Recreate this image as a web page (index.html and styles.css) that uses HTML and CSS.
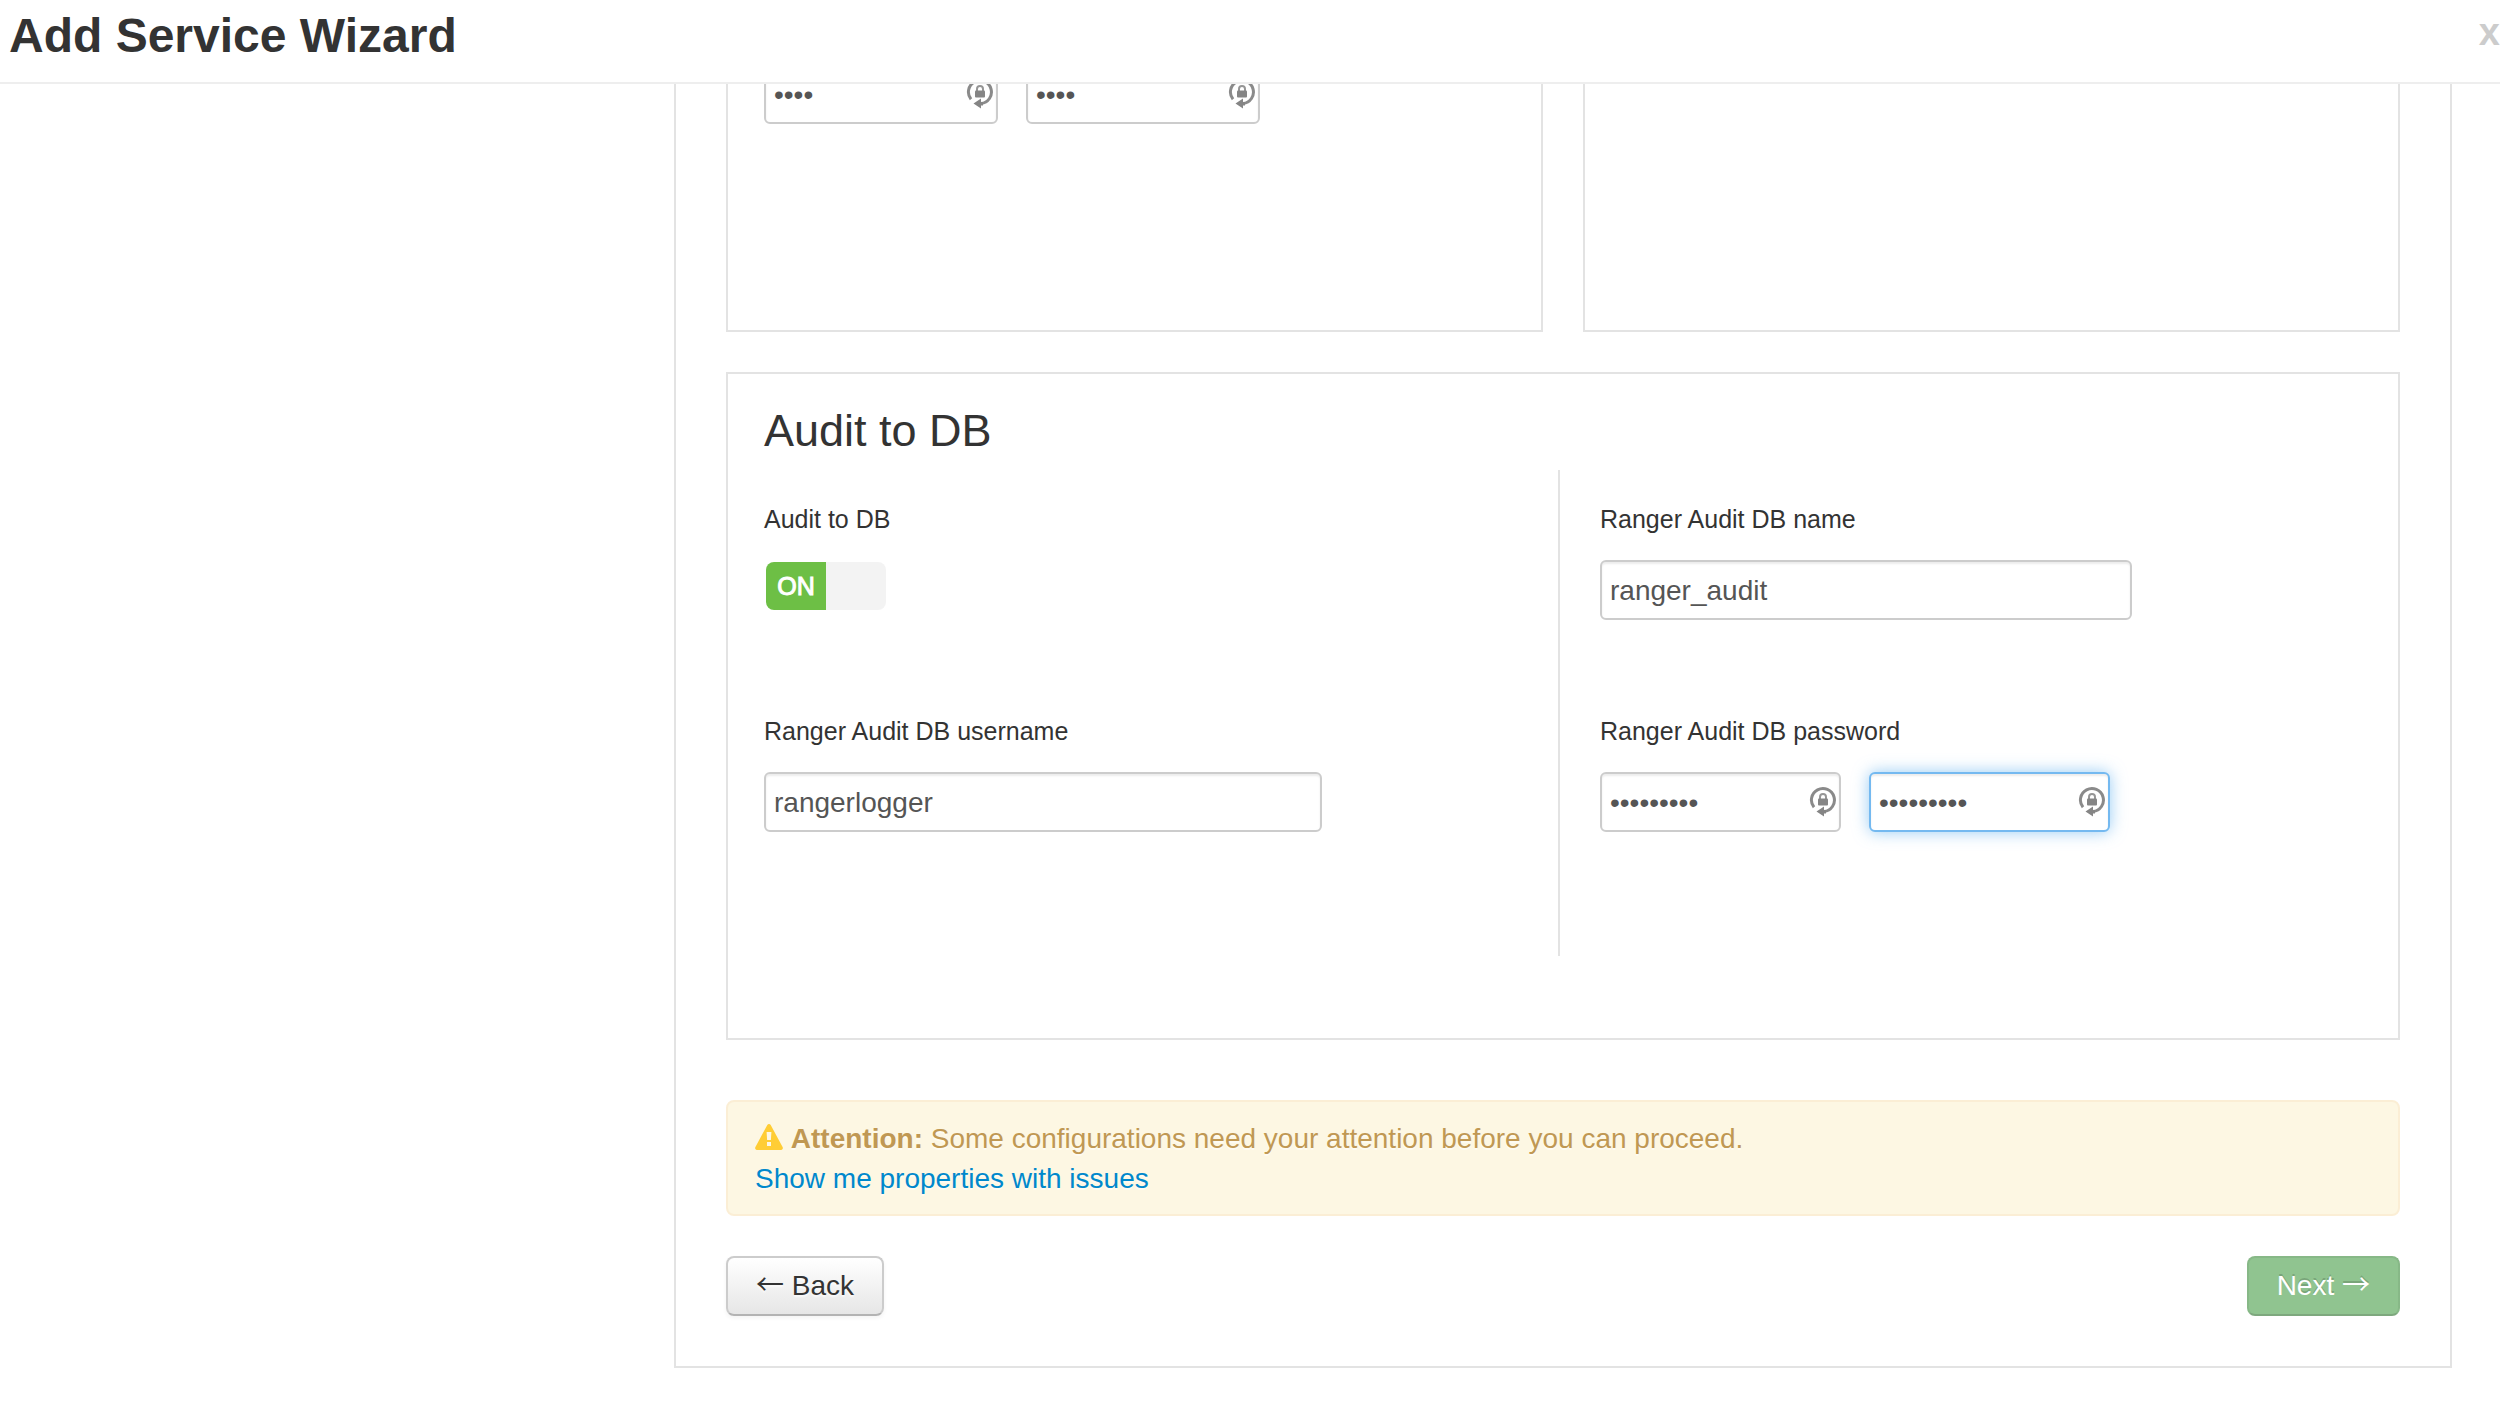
FILE: index.html
```html
<!DOCTYPE html>
<html lang="en">
<head>
<meta charset="utf-8">
<title>Add Service Wizard</title>
<meta name="viewport" content="width=device-width, initial-scale=1">
<link rel="stylesheet" href="styles.css">
</head>
<body>
<svg class="sprite" aria-hidden="true">
  <symbol id="lock-cycle" viewBox="0 0 28 32">
    <path d="M5 21.300A11.500 11.500 0 1 1 15 25.500" fill="none" stroke="#8a8a8a" stroke-width="3"/>
    <path d="M7.500 25.500l7.500-5v3.500h2v3.500h-2v3z" fill="#858585"/>
    <path d="M11 13v-2a3 3 0 0 1 6 0v2" fill="none" stroke="#959595" stroke-width="2"/>
    <rect x="9" y="12.500" width="10" height="7" rx="1" fill="#858585"/>
  </symbol>
</svg>

<header class="wizard-header">
  <h1 class="wizard-title">Add Service Wizard</h1>
  <button class="close" type="button" aria-label="Close">x</button>
</header>

<div class="layout">
  <main class="panel">
    <div class="section-row">
      <section class="section section-open">
        <div class="password-pair">
          <div class="password">
            <input class="input" type="password" value="pass" aria-label="Password">
            <svg class="password-icon"><use href="#lock-cycle"/></svg>
          </div>
          <div class="password">
            <input class="input" type="password" value="pass" aria-label="Confirm password">
            <svg class="password-icon"><use href="#lock-cycle"/></svg>
          </div>
        </div>
      </section>
      <section class="section section-open"></section>
    </div>

    <section class="section section-audit">
      <h2 class="section-title">Audit to DB</h2>
      <div class="columns">
        <div class="column">
          <div class="field">
            <label class="label" for="audit-db">Audit to DB</label>
            <div class="switch">
              <input class="switch-input" type="checkbox" id="audit-db" checked>
              <span class="switch-on">ON</span>
            </div>
          </div>
          <div class="field">
            <label class="label" for="db-user">Ranger Audit DB username</label>
            <input class="input input-wide" type="text" id="db-user" value="rangerlogger">
          </div>
        </div>
        <div class="column column-divided">
          <div class="field">
            <label class="label" for="db-name">Ranger Audit DB name</label>
            <input class="input input-medium" type="text" id="db-name" value="ranger_audit">
          </div>
          <div class="field">
            <label class="label" for="db-pass">Ranger Audit DB password</label>
            <div class="password-pair">
              <div class="password password-large">
                <input class="input" type="password" id="db-pass" value="rangerpwd">
                <svg class="password-icon"><use href="#lock-cycle"/></svg>
              </div>
              <div class="password password-large">
                <input class="input input-focused" type="password" value="rangerpwd" aria-label="Confirm Ranger Audit DB password">
                <svg class="password-icon"><use href="#lock-cycle"/></svg>
              </div>
            </div>
          </div>
        </div>
      </div>
    </section>

    <div class="alert" role="alert">
      <p class="alert-line">
        <svg class="alert-icon" viewBox="0 0 28 26" aria-hidden="true"><path fill="#ffcd35" fill-rule="evenodd" d="M12.300 1a2 2 0 0 1 3.400 0l12 22.200a2 2 0 0 1-1.700 2.800H2a2 2 0 0 1-1.700-2.800zM11.600 8l.5 8h3.800l.5-8zM12 18v4h4v-4z"/></svg>
        <strong>Attention:</strong> Some configurations need your attention before you can proceed.
      </p>
      <a class="alert-link" href="#issues">Show me properties with issues</a>
    </div>

    <div class="actions">
      <button class="btn" type="button"><span class="arrow">←</span> Back</button>
      <button class="btn btn-success" type="button" disabled>Next <span class="arrow">→</span></button>
    </div>
  </main>
</div>
</body>
</html>
```

FILE: styles.css
```css
* {
  box-sizing: border-box;
}

body {
  margin: 0;
  background: #fff;
  color: #333;
  font: 28px/40px "Liberation Sans", Arial, sans-serif;
}

.sprite {
  display: none;
}

/* Header stays above the scrolled form */
.wizard-header {
  position: fixed;
  top: 0;
  left: 0;
  right: 0;
  z-index: 1;
  display: flex;
  justify-content: space-between;
  align-items: flex-start;
  padding: 0 0 10px 9px;
  border-bottom: 2px solid #eee;
  background: #fff;
}

.wizard-title {
  margin: 0;
  font-size: 48px;
  line-height: 72px;
}

.close {
  padding: 0;
  border: 0;
  background: none;
  color: #ccc;
  font: bold 38px/64px "Liberation Sans", Arial, sans-serif;
  cursor: pointer;
}

.layout {
  padding: 0 48px 46px 674px;
}

.panel {
  padding: 0 50px 50px;
  border: 2px solid #e3e3e3;
  border-top: 0;
}

.section-row {
  display: grid;
  grid-template-columns: 1fr 1fr;
  gap: 40px;
  margin-bottom: 40px;
}

.section {
  border: 2px solid #e3e3e3;
}

.section-open {
  padding: 64px 36px 206px;
  border-top: 0;
}

.section-audit {
  padding: 18px 46px 82px 36px;
}

.section-title {
  margin: 0;
  font-size: 45px;
  font-weight: normal;
  line-height: 78px;
}

.columns {
  display: grid;
  grid-template-columns: 1fr 1fr;
}

.column {
  display: grid;
  gap: 92px;
  padding: 30px 0 124px;
}

.column-divided {
  padding-left: 40px;
  border-left: 2px solid #e3e3e3;
}

.field {
  height: 120px;
}

.label {
  display: block;
  width: max-content;
  margin-bottom: 22px;
  font-size: 25px;
  line-height: 38px;
}

.input {
  display: block;
  width: 100%;
  height: 60px;
  margin: 0;
  padding: 9px 8px 7px;
  border: 2px solid #ccc;
  border-radius: 6px;
  outline: 0;
  background: #fff;
  box-shadow: inset 0 2px 2px rgba(0, 0, 0, .075);
  color: #555;
  font: 28px/40px "Liberation Sans", Arial, sans-serif;
}

.input-wide {
  max-width: 558px;
}

.input-medium {
  max-width: 532px;
}

.input-focused {
  border-color: #74b9f0;
  box-shadow: inset 0 2px 2px rgba(0, 0, 0, .075), 0 0 16px rgba(82, 168, 236, .6);
}

.password-pair {
  display: flex;
  gap: 28px;
}

.password {
  position: relative;
  width: 234px;
}

.password-large {
  width: 241px;
}

.password-icon {
  position: absolute;
  top: 14px;
  right: 4px;
  width: 28px;
  height: 32px;
}

.switch {
  position: relative;
  width: 120px;
  height: 48px;
  margin: 24px 2px;
}

.switch-input {
  display: block;
  width: 100%;
  height: 100%;
  margin: 0;
  appearance: none;
  border-radius: 8px;
  background: linear-gradient(to right, #6dbf45 50%, #f3f3f3 50%);
  cursor: pointer;
}

.switch-on {
  position: absolute;
  inset: 0 50% 0 0;
  color: #fff;
  font-size: 25px;
  line-height: 48px;
  text-align: center;
  -webkit-text-stroke: 1px #fff;
  pointer-events: none;
}

.alert {
  margin: 60px 0 40px;
  padding: 17px 27px 15px;
  border: 2px solid #fbeed5;
  border-radius: 8px;
  background: #fdf7e3;
  color: #c09853;
  text-shadow: 0 2px 0 rgba(255, 255, 255, .5);
}

.alert-line {
  margin: 0;
}

.alert-icon {
  width: 28px;
  height: 26px;
  vertical-align: -2px;
}

.alert-link {
  color: #08c;
  text-decoration: none;
}

.actions {
  display: flex;
  justify-content: space-between;
}

.btn {
  height: 60px;
  padding: 8px 28px;
  border: 2px solid #ccc;
  border-bottom-color: #b3b3b3;
  border-radius: 8px;
  background: linear-gradient(#fff, #e6e6e6);
  box-shadow: 0 2px 4px rgba(0, 0, 0, .05);
  color: #333;
  font: 28px/40px "Liberation Sans", Arial, sans-serif;
  text-shadow: 0 2px 2px rgba(255, 255, 255, .75);
  cursor: pointer;
}

.btn-success {
  border-color: #87b887;
  border-bottom-color: #7ea87e;
  background: #90c490;
  box-shadow: none;
  color: #fff;
  text-shadow: 0 -2px 0 rgba(0, 0, 0, .16);
  cursor: default;
}

.arrow {
  font-family: "Noto Sans CJK JP", sans-serif;
  line-height: 1;
}
```
